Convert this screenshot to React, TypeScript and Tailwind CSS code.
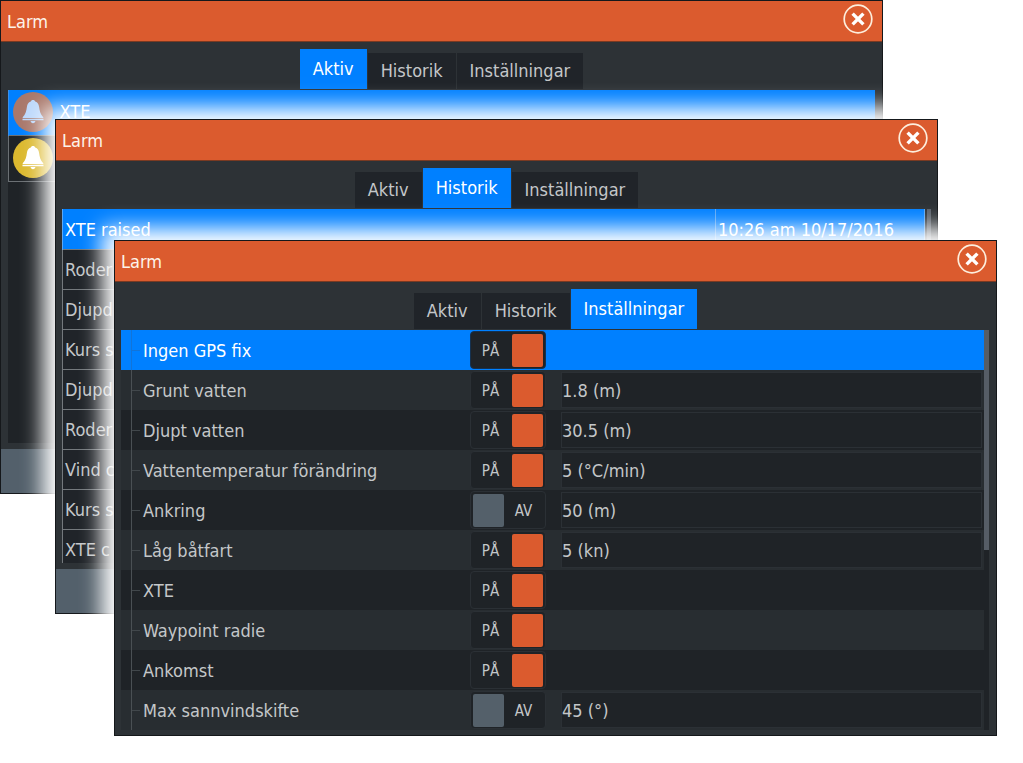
import type { ReactNode } from "react";

type TabName = "Aktiv" | "Historik" | "Inställningar";

const TABS: TabName[] = ["Aktiv", "Historik", "Inställningar"];

type Setting = { name: string; on: boolean; value?: string };

const SETTINGS: Setting[] = [
  { name: "Ingen GPS fix", on: true },
  { name: "Grunt vatten", on: true, value: "1.8 (m)" },
  { name: "Djupt vatten", on: true, value: "30.5 (m)" },
  { name: "Vattentemperatur förändring", on: true, value: "5 (°C/min)" },
  { name: "Ankring", on: false, value: "50 (m)" },
  { name: "Låg båtfart", on: true, value: "5 (kn)" },
  { name: "XTE", on: true },
  { name: "Waypoint radie", on: true },
  { name: "Ankomst", on: true },
  { name: "Max sannvindskifte", on: false, value: "45 (°)" },
];

const HISTORY = ["Roder", "Djupd", "Kurs s", "Djupd", "Roder", "Vind c", "Kurs s", "XTE c"];

function CloseIcon() {
  return (
    <svg viewBox="0 0 30 30" className="size-[30px]" fill="none" aria-hidden="true">
      <circle cx="15" cy="15" r="13.8" stroke="#fdeedd" strokeWidth="1.7" />
      <path d="M9.6 9.6 20.4 20.4M20.4 9.6 9.6 20.4" stroke="#ffffff" strokeWidth="3.4" />
    </svg>
  );
}

function BellIcon({ disc, bell }: { disc: string; bell: string }) {
  return (
    <svg viewBox="0 0 40 40" className="size-10 shrink-0" aria-hidden="true">
      <circle cx="20" cy="20" r="20" fill={disc} />
      <path
        d="M20 8c1.300 0 2 .7 2.200 1.600 2.500.8 3.500 2.700 3.900 5.300.5 3.700 1.300 7.600 4.200 10.300v.9H9.700v-.9c2.900-2.700 3.700-6.600 4.200-10.300.4-2.600 1.400-4.500 3.900-5.300.2-.9.9-1.600 2.200-1.600z"
        fill={bell}
      />
      <path d="M9.500 26.700h21v1.600h-21zM17.600 29h4.800c-.2 1.400-1.100 2.200-2.400 2.200s-2.200-.8-2.400-2.200z" fill={bell} />
    </svg>
  );
}

function AlarmWindow({
  active,
  place,
  children,
}: {
  active: TabName;
  place: string;
  children: ReactNode;
}) {
  return (
    <section
      aria-label={`Larm – ${active}`}
      className={`absolute flex flex-col border border-[#15181b] bg-[#2d3236] shadow-[0_0_20px_12px_#ffffff] ${place}`}
    >
      <header className="flex h-[41px] items-start justify-between border-b border-[#7a3a22] bg-[#db5b2e] pl-1.5 pr-[9px]">
        <h2 className="pt-[9px] text-lg leading-6 text-[#fdf3ea]">Larm</h2>
        <button type="button" aria-label="Stäng" className="pt-[3px]">
          <CloseIcon />
        </button>
      </header>
      <div role="tablist" className="flex h-12 items-end justify-center gap-px pb-px">
        {TABS.map((tab) => (
          <button
            key={tab}
            type="button"
            role="tab"
            aria-selected={tab === active}
            className={
              tab === active
                ? "h-10 bg-[#0080ff] px-[13px] text-lg text-white"
                : "h-9 bg-[#202429] px-[13px] text-lg text-[#c4c7c9]"
            }
          >
            {tab}
          </button>
        ))}
      </div>
      {children}
    </section>
  );
}

function ActiveList() {
  return (
    <>
      <div className="mx-[7px] min-h-[353px] bg-[#1f2327]">
        <table className="w-full border-collapse text-left text-lg">
          <tbody>
            <tr className="h-[45px] border-l border-[#3a8fe8] bg-[#0080ff] text-white">
              <td className="w-[51px] pl-1">
                <BellIcon disc="#a9786b" bell="#bcd8fb" />
              </td>
              <td>XTE</td>
            </tr>
            <tr className="h-[46px] border border-[#6b7074]">
              <td className="w-[51px] pl-1">
                <BellIcon disc="#dcb92f" bell="#ffffff" />
              </td>
              <td />
            </tr>
          </tbody>
        </table>
      </div>
      <footer className="mt-1.5 h-11 bg-[#53606b]" />
    </>
  );
}

function HistoryList() {
  return (
    <>
      <div className="flex h-[354px] gap-0.5 overflow-hidden pl-1.5 pr-1.5">
        <table className="w-full flex-1 border-collapse self-start bg-[#202429] text-left text-lg text-[#c4c7c9]">
          <tbody>
            <tr className="h-10 bg-[#0080ff] text-white">
              <td className="border-l border-[#5aa7f5] pl-0.5 pt-0.5">XTE raised</td>
              <td className="w-[209px] border-x border-[#5aa7f5] pl-0.5 pt-0.5">10:26 am 10/17/2016</td>
            </tr>
            {HISTORY.map((entry, index) => (
              <tr key={index} className="h-10">
                <td className="border-l border-t border-[#74797d] pl-0.5 pt-0.5">{entry}</td>
                <td className="border border-b-0 border-[#74797d]" />
              </tr>
            ))}
          </tbody>
        </table>
        <div className="w-1 bg-[#5b626b]" />
      </div>
      <footer className="mt-1.5 h-11 bg-[#53606b]" />
    </>
  );
}

function Toggle({ name, on, lit }: { name: string; on: boolean; lit: boolean }) {
  return (
    <button
      type="button"
      role="switch"
      aria-checked={on}
      aria-label={name}
      className={`flex h-[38px] w-[76px] items-center rounded-sm border bg-[#1f2327] px-0.5 text-[15px] text-[#c4c7c9] ${
        lit ? "border-[#15314f]" : "border-[#2b3035]"
      }`}
    >
      {on ? (
        <>
          <span className="flex-1 pr-1 pt-1 text-center">PÅ</span>
          <span className="h-[33px] w-[31px] rounded-xs bg-[#db5b2e]" />
        </>
      ) : (
        <>
          <span className="h-[33px] w-[31px] rounded-xs bg-[#54606a]" />
          <span className="flex-1 pt-1 text-center">AV</span>
        </>
      )}
    </button>
  );
}

function SettingsList() {
  return (
    <div className="flex pb-[5px] pl-1.5 pr-[7px]">
      <ul className="flex-1">
        {SETTINGS.map((setting, index) => {
          const lit = index === 0;
          return (
            <li
              key={setting.name}
              className={`grid h-10 grid-cols-[349px_91px_1fr] items-center pr-0.5 text-lg ${
                lit
                  ? "bg-[#0080ff] text-white"
                  : index % 2 === 1
                    ? "bg-[#282d31] text-[#c4c7c9]"
                    : "bg-[#1f2327] text-[#c4c7c9]"
              }`}
            >
              <span className="flex h-full items-center pl-2.5">
                <span
                  className={`flex h-full w-3 items-center border-l ${
                    lit ? "border-[#1274d8]" : "border-[#4a5054]"
                  }`}
                >
                  <span className={`h-px w-2 ${lit ? "bg-[#1274d8]" : "bg-[#41474b]"}`} />
                </span>
                <span className="pt-0.5">{setting.name}</span>
              </span>
              <Toggle name={setting.name} on={setting.on} lit={lit} />
              {setting.value !== undefined && (
                <input
                  type="text"
                  aria-label={`${setting.name}, gräns`}
                  defaultValue={setting.value}
                  className="h-9 w-full border border-[#2b3035] bg-[#1f2327] text-lg text-[#c4c7c9] outline-none"
                />
              )}
            </li>
          );
        })}
      </ul>
      <div className="w-[5px] bg-[#1f2327]">
        <div className="h-[220px] bg-[#565d66]" />
      </div>
    </div>
  );
}

export default function App() {
  return (
    <main className="relative h-screen min-h-[740px] overflow-hidden bg-white font-['DejaVu_Sans_Condensed','DejaVu_Sans',sans-serif]">
      <AlarmWindow active="Aktiv" place="left-0 right-[140px] top-0">
        <ActiveList />
      </AlarmWindow>
      <AlarmWindow active="Historik" place="left-[55px] right-[85px] top-[119px]">
        <HistoryList />
      </AlarmWindow>
      <AlarmWindow active="Inställningar" place="left-[114px] right-[26px] top-[240px]">
        <SettingsList />
      </AlarmWindow>
    </main>
  );
}
